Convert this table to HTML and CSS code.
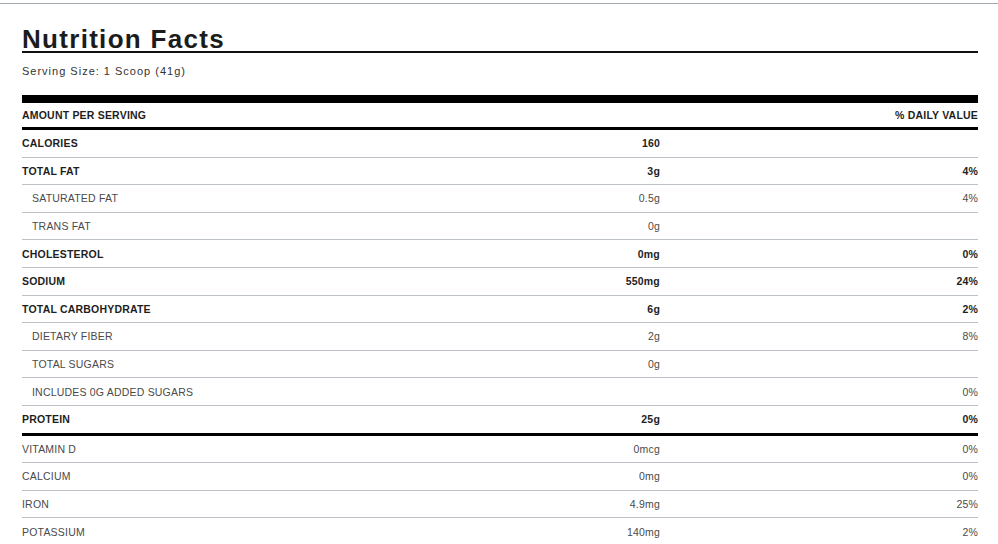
FILE: index.html
```html
<!DOCTYPE html>
<html lang="en">
<head>
<meta charset="utf-8">
<title>Nutrition Facts</title>
<link rel="stylesheet" href="styles.css">
</head>
<body>
<div class="page">
  <section class="facts">
    <h1 class="title">Nutrition Facts</h1>
    <p class="serving">Serving Size: 1 Scoop (41g)</p>
    <div class="table">
      <div class="row head"><span class="label">AMOUNT PER SERVING</span><span class="amt"></span><span class="dv">% DAILY VALUE</span></div>
      <div class="row main"><span class="label">CALORIES</span><span class="amt">160</span><span class="dv"></span></div>
      <div class="row main"><span class="label">TOTAL FAT</span><span class="amt">3g</span><span class="dv">4%</span></div>
      <div class="row sub"><span class="label">SATURATED FAT</span><span class="amt">0.5g</span><span class="dv">4%</span></div>
      <div class="row sub"><span class="label">TRANS FAT</span><span class="amt">0g</span><span class="dv"></span></div>
      <div class="row main"><span class="label">CHOLESTEROL</span><span class="amt">0mg</span><span class="dv">0%</span></div>
      <div class="row main"><span class="label">SODIUM</span><span class="amt">550mg</span><span class="dv">24%</span></div>
      <div class="row main"><span class="label">TOTAL CARBOHYDRATE</span><span class="amt">6g</span><span class="dv">2%</span></div>
      <div class="row sub"><span class="label">DIETARY FIBER</span><span class="amt">2g</span><span class="dv">8%</span></div>
      <div class="row sub"><span class="label">TOTAL SUGARS</span><span class="amt">0g</span><span class="dv"></span></div>
      <div class="row sub"><span class="label">INCLUDES 0G ADDED SUGARS</span><span class="amt"></span><span class="dv">0%</span></div>
      <div class="row main end"><span class="label">PROTEIN</span><span class="amt">25g</span><span class="dv">0%</span></div>
      <div class="row vit"><span class="label">VITAMIN D</span><span class="amt">0mcg</span><span class="dv">0%</span></div>
      <div class="row vit"><span class="label">CALCIUM</span><span class="amt">0mg</span><span class="dv">0%</span></div>
      <div class="row vit"><span class="label">IRON</span><span class="amt">4.9mg</span><span class="dv">25%</span></div>
      <div class="row vit"><span class="label">POTASSIUM</span><span class="amt">140mg</span><span class="dv">2%</span></div>
    </div>
  </section>
</div>
</body>
</html>
```

FILE: styles.css
```css
html, body {
  margin: 0;
  padding: 0;
  background: #ffffff;
}
body {
  padding-top: 3px;
  font-family: "Liberation Sans", Arial, sans-serif;
  color: #222222;
}
.page {
  border-top: 1px solid #a3abb1;
}
.facts {
  padding: 0 20px 0 22px;
}
.title {
  margin: 0;
  padding-top: 23px;
  font-size: 26px;
  line-height: 24px;
  font-weight: 700;
  letter-spacing: 1.3px;
  color: #1c1c1c;
  border-bottom: 2px solid #111111;
}
.serving {
  margin: 0;
  padding: 11px 0 17px;
  font-size: 11px;
  line-height: 14px;
  letter-spacing: 1px;
  color: #333333;
}
.table {
  border-top: 8px solid #000000;
}
.row {
  display: grid;
  grid-template-columns: 538px 100px 1fr;
  align-items: center;
  height: 26.6px;
  border-bottom: 1px solid #bcc2c7;
  font-size: 10.5px;
  letter-spacing: 0.2px;
}
.row .amt, .row .dv {
  text-align: right;
}
.row.head {
  height: 24px;
  border-bottom: 3px solid #000000;
  font-weight: 700;
  color: #1e1e1e;
}
.row.main {
  font-weight: 700;
  color: #1e1e1e;
}
.row.sub {
  color: #4a4a4a;
}
.row.sub .label {
  padding-left: 10px;
}
.row.vit {
  color: #4a4a4a;
}
.row.end {
  border-bottom: 3px solid #000000;
}
```
